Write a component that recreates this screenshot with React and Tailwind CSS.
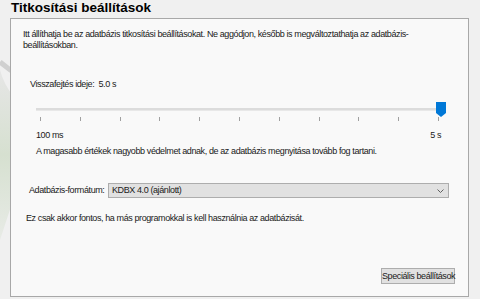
import React from 'react';

function App() {
    const ticks = [0, 1, 2, 3, 4, 5, 6, 7, 8, 9, 10];

    return (
        <div className="relative w-[480px] h-[299px] overflow-hidden bg-[#f0f0f0] text-[9px] tracking-[-0.4px] text-[#1a1a1a]" style={{ fontFamily: '"Liberation Sans", Arial, sans-serif' }}>

            {/* background swirl */}
            <svg className="absolute left-0 top-0" width="60" height="299" viewBox="0 0 60 299">
                <defs>
                    <linearGradient id="g" x1="0" y1="0" x2="0" y2="1">
                        <stop offset="0" stopColor="#e6e6e6" />
                        <stop offset="0.5" stopColor="#d6e0d0" />
                        <stop offset="1" stopColor="#e8ebe6" />
                    </linearGradient>
                </defs>
                <path d="M0 70 Q 8 100 40 118 L 0 240 Z" fill="url(#g)" />
                <path d="M0 62 Q 16 76 40 86" stroke="#d0d0d0" strokeWidth="5" fill="none" />
            </svg>

            <div className="relative flex flex-col h-full">
                {/* Title */}
                <h1 className="pl-[11px] h-[18px] text-[13.5px] tracking-normal font-bold leading-[16px] text-black">Titkosítási beállítások</h1>

                {/* Panel */}
                <div className="ml-[10px] w-[459px] h-[279px] border border-[#a8a8a8] bg-[#f9f9f9] flex flex-col">
                    <p className="pl-[12px] pr-[30px] pt-[10px] leading-[11px]">
                        Itt állíthatja be az adatbázis titkosítási beállításokat. Ne aggódjon, később is megváltoztathatja az adatbázis-beállításokban.
                    </p>

                    <div className="pl-[19px] pt-[27px] leading-[13px]">Visszafejtés ideje:&nbsp; 5.0 s</div>

                    {/* Slider */}
                    <div className="relative ml-[25px] mt-[10px] w-[410px] h-[16px]">
                        <div className="absolute left-0 right-0 top-[7px] h-[3px] bg-[#dcdcdc] border-b border-[#e8e8e8]" />
                        <svg className="absolute right-0 top-[1px]" width="10" height="15" viewBox="0 0 10 15">
                            <path d="M0 0 H10 V11 L5 15 L0 11 Z" fill="#0078d7" />
                        </svg>
                    </div>
                    <div className="ml-[29px] w-[399px] flex justify-between h-[4px]">
                        {ticks.map((t) => (
                            <div key={t} className="w-px h-[4px] bg-[#a0a0a0]" />
                        ))}
                    </div>
                    <div className="ml-[25px] w-[405px] mt-[8px] flex justify-between leading-[13px]">
                        <span>100 ms</span>
                        <span>5 s</span>
                    </div>
                    <div className="pl-[25px] pt-[3px] leading-[13px]">A magasabb értékek nagyobb védelmet adnak, de az adatbázis megnyitása tovább fog tartani.</div>

                    {/* Format */}
                    <div className="flex items-center pl-[18px] mt-[25px]">
                        <span className="w-[79px] whitespace-nowrap">Adatbázis-formátum:</span>
                        <div className="flex items-center justify-between w-[341px] h-[15px] border border-[#adadad] bg-[#e1e1e1] pl-[3px] pr-[4px]">
                            <span className="leading-[13px]">KDBX 4.0 (ajánlott)</span>
                            <svg width="7" height="4" viewBox="0 0 7 4">
                                <path d="M0.5 0.5 L3.5 3.5 L6.5 0.5" stroke="#606060" fill="none" strokeWidth="1" />
                            </svg>
                        </div>
                    </div>
                    <div className="pl-[15px] pt-[14px] leading-[13px]">Ez csak akkor fontos, ha más programokkal is kell használnia az adatbázisát.</div>

                    {/* Button */}
                    <div className="flex-1 flex items-end justify-end pr-[13px] pb-[12px]">
                        <button className="h-[16px] w-[74px] whitespace-nowrap border border-[#adadad] bg-[#e1e1e1] leading-[13px] text-[9px] tracking-[-0.4px]">Speciális beállítások</button>
                    </div>
                </div>
            </div>
        </div>
    );
}

export default App;
